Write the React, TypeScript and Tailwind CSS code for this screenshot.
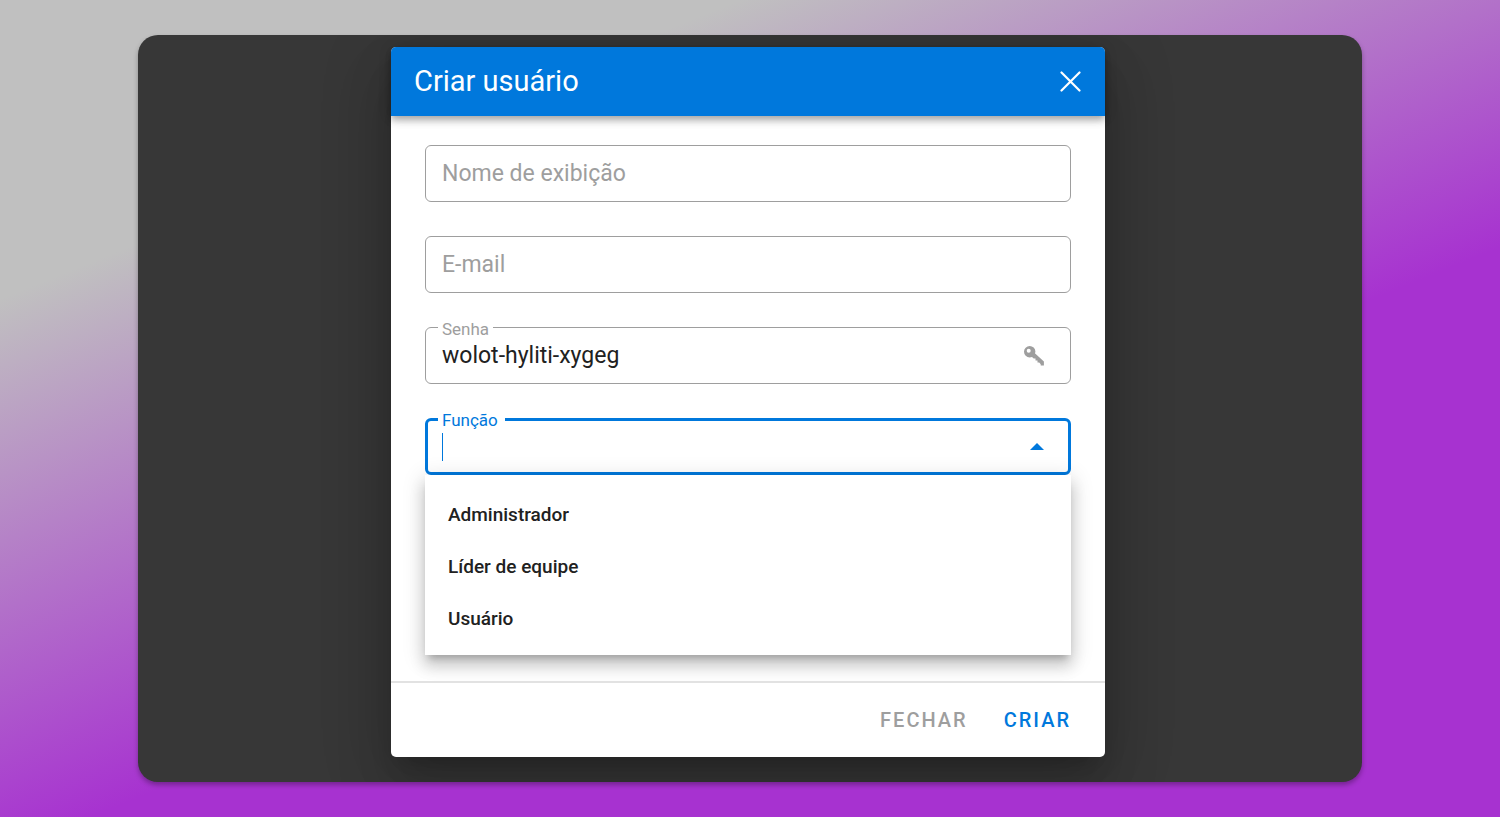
import { useState } from "react";

const roles = ["Administrador", "Líder de equipe", "Usuário"];

const fields = [
  { id: "name", label: "Nome de exibição", type: "text" },
  { id: "email", label: "E-mail", type: "email" },
];

function KeyIcon() {
  return (
    <svg className="w-6 h-6" viewBox="0 0 24 24" fill="currentColor">
      <path
        fillRule="evenodd"
        d="M7.7 2a5.7 5.7 0 1 0 0 11.4c.8 0 1.6-.2 2.3-.5l1.7 1.7h1.8v2h2v2h1.7l1.5 1.6v1.3h3.2v-4l-9-8.300c.3-.5.5-1.100.5-1.700A5.700 5.700 0 0 0 7.700 2zM6.700 4.700a2 2 0 1 1 0 4 2 2 0 0 1 0-4z"
      />
    </svg>
  );
}

export default function App() {
  const [role, setRole] = useState("");
  const [password, setPassword] = useState("wolot-hyliti-xygeg");

  return (
    <div className="min-h-screen flex px-[138px] py-[35px] font-[Roboto,sans-serif] bg-[linear-gradient(158deg,#c0c0c0_21%,#a732d0_60%)]">
      <main className="flex-1 flex items-start justify-center overflow-hidden pt-3 pr-1 pb-6 rounded-[20px] bg-[#373737] shadow-[0_3px_5px_rgba(0,0,0,0.3)]">
        <div
          role="dialog"
          aria-labelledby="dialog-title"
          className="w-full max-w-[714px] rounded-[5px] bg-white shadow-[0_16px_22px_-10px_rgba(0,0,0,0.2),0_34px_54px_4px_rgba(0,0,0,0.14),0_13px_66px_11px_rgba(0,0,0,0.12)]"
        >
          {/* Title bar */}
          <header className="relative flex items-center justify-between h-[69px] pl-[23px] pr-6 rounded-t-[5px] bg-[#0078dc] text-white shadow-[0_3px_6px_-1px_rgba(0,0,0,0.2),0_6px_7px_rgba(0,0,0,0.14),0_1px_14px_rgba(0,0,0,0.12)]">
            <h1 id="dialog-title" className="pb-0.5 text-[29px] leading-9">
              Criar usuário
            </h1>
            <button type="button" aria-label="Fechar janela">
              <svg className="w-[21px] h-[21px]" viewBox="0 0 21 21" fill="none" stroke="currentColor" strokeWidth="2.2" strokeLinecap="round">
                <path d="M1.5 1.5l18 18M19.5 1.5l-18 18" />
              </svg>
            </button>
          </header>

          <form>
            <div className="flex flex-col gap-[34px] px-[34px] pt-[29px] pb-[206px]">
              {fields.map((field) => (
                <div key={field.id} className="relative">
                  <input
                    id={field.id}
                    type={field.type}
                    placeholder=" "
                    className="peer block w-full h-[57px] px-4 pt-0.5 rounded-md border border-[#9e9e9e] text-[23px] text-[#212121] outline-none"
                  />
                  <label
                    htmlFor={field.id}
                    className="absolute inset-y-0 left-[17px] hidden items-center pt-0.5 text-[23px] text-[#9e9e9e] peer-placeholder-shown:flex"
                  >
                    {field.label}
                  </label>
                </div>
              ))}

              {/* Password */}
              <div className="relative flex items-center h-[57px] pl-4 pr-6 rounded-md border border-[#9e9e9e]">
                <label htmlFor="password" className="absolute left-3 -top-[9px] px-1 bg-white text-[17px] leading-5 text-[#9e9e9e]">
                  Senha
                </label>
                <input
                  id="password"
                  type="text"
                  value={password}
                  onChange={(e) => setPassword(e.target.value)}
                  className="flex-1 min-w-0 pt-0.5 text-[23px] text-[#212121] outline-none"
                />
                <button type="button" aria-label="Gerar senha" className="text-[#9e9e9e]">
                  <KeyIcon />
                </button>
              </div>

              {/* Role picker */}
              <div className="relative flex items-center h-[57px] pl-3.5 pr-6 rounded-md border-3 border-[#0078dc]">
                <label htmlFor="role" className="absolute left-[10px] -top-[11px] pl-1 pr-[7px] bg-white text-[17px] leading-5 text-[#0078dc]">
                  Função
                </label>
                <span className="w-px h-7 bg-[#0078dc]" />
                <input
                  id="role"
                  role="combobox"
                  aria-expanded="true"
                  aria-controls="role-list"
                  value={role}
                  onChange={(e) => setRole(e.target.value)}
                  className="flex-1 min-w-0 pt-0.5 text-[23px] text-[#212121] outline-none"
                />
                <svg className="w-3.5 h-[7px] text-[#0078dc]" viewBox="0 0 14 7" fill="currentColor">
                  <path d="M0 7l7-7 7 7z" />
                </svg>
                <ul
                  id="role-list"
                  role="listbox"
                  aria-label="Função"
                  className="absolute -left-[3px] -right-[3px] top-[54px] pt-3.5 pb-2.5 bg-white shadow-[0_7px_7px_-4px_rgba(0,0,0,0.2),0_11px_14px_1px_rgba(0,0,0,0.14),0_4px_20px_3px_rgba(0,0,0,0.12)]"
                >
                  {roles.map((item) => (
                    <li key={item} role="option" aria-selected={role === item}>
                      <button
                        type="button"
                        onClick={() => setRole(item)}
                        className="block w-full h-13 px-[23px] text-left text-[19px] font-medium text-[#212121]"
                      >
                        {item}
                      </button>
                    </li>
                  ))}
                </ul>
              </div>
            </div>

            <footer className="flex items-center justify-end gap-9 h-[76px] px-[34px] border-t-2 border-[#e2e2e2] text-xl font-medium tracking-widest">
              <button type="button" className="text-[#9e9e9e]">
                FECHAR
              </button>
              <button type="submit" className="text-[#0078dc]">
                CRIAR
              </button>
            </footer>
          </form>
        </div>
      </main>
    </div>
  );
}
